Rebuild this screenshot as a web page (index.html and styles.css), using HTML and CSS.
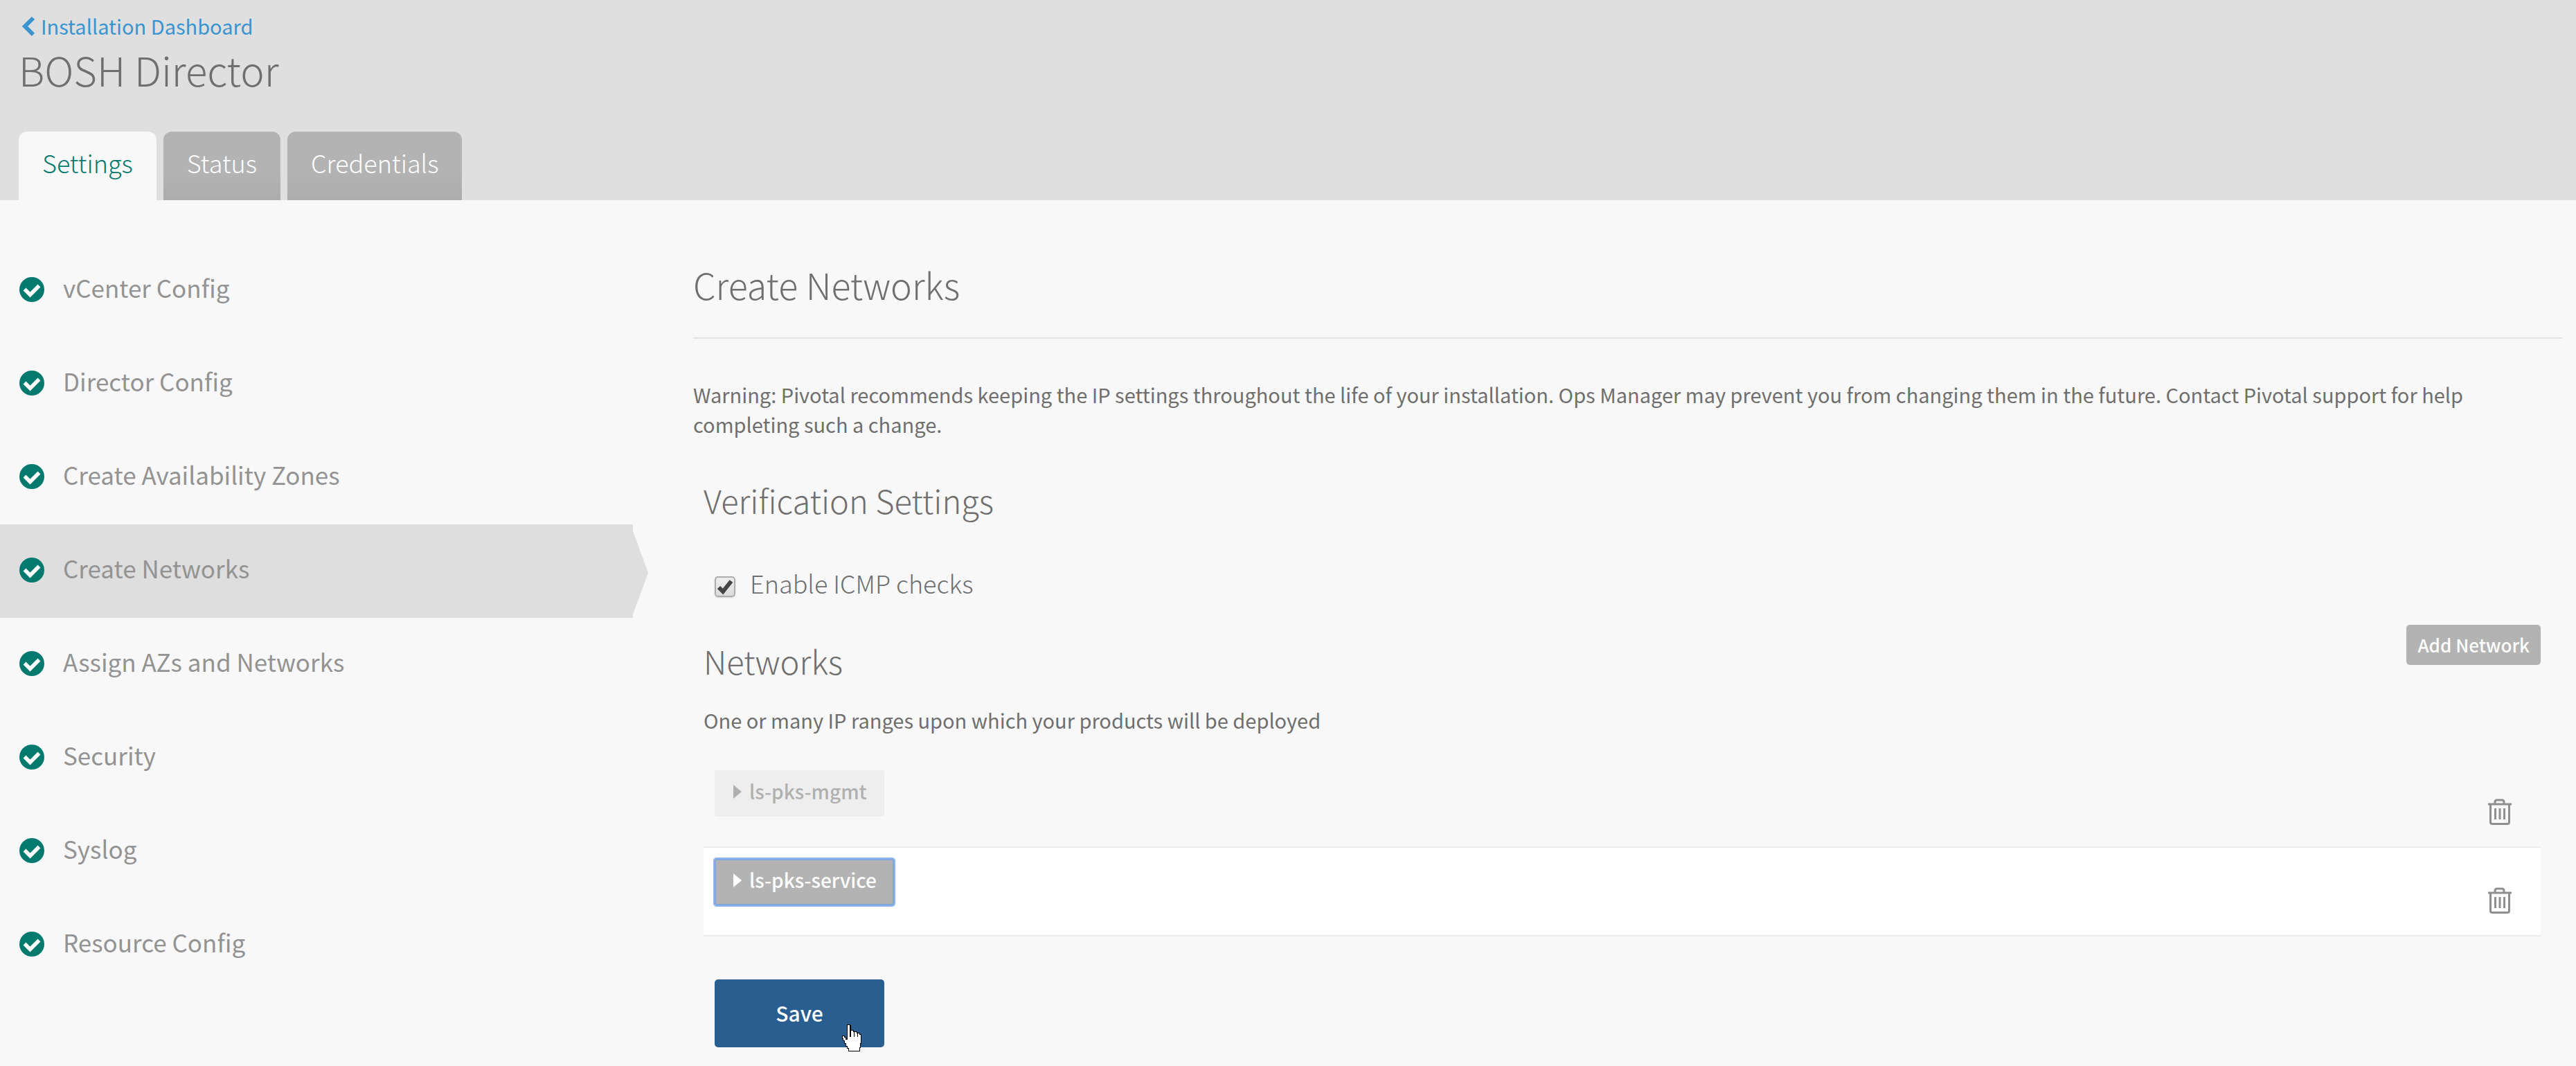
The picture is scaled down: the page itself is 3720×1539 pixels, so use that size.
FILE: index.html
```html
<!DOCTYPE html>
<html lang="en">
<head>
<meta charset="utf-8">
<meta name="viewport" content="width=device-width, initial-scale=1">
<title>BOSH Director</title>
<link rel="stylesheet" href="styles.css">
</head>
<body>
<svg class="sprite" aria-hidden="true">
  <symbol id="check" viewBox="0 0 36 36">
    <circle cx="18" cy="18" r="18" fill="#04796d"/>
    <path d="M7.500 17.500 L15.500 25.500 L28.500 12.500" fill="none" stroke="#fff" stroke-width="5.500"/>
  </symbol>
  <symbol id="trash" viewBox="0 0 36 38">
    <g fill="none" stroke="#8f8f8f" stroke-width="3">
      <path d="M1 8H35"/>
      <path d="M11 8V5Q11 2 14 2H21Q24 2 24 5V8"/>
      <path d="M4.500 8V34Q4.500 36.500 7 36.500H29Q31.500 36.500 31.500 34V8"/>
      <path d="M11.500 14V30M18 14V30M24.500 14V30"/>
    </g>
  </symbol>
  <symbol id="caret" viewBox="0 0 12 20">
    <path d="M0 0L12 10L0 20Z" fill="currentColor"/>
  </symbol>
</svg>

<header class="header">
  <a class="back" href="#dashboard"><svg class="back-icon" viewBox="0 0 20 30" aria-hidden="true"><path d="M17 3L5 15L17 27" fill="none" stroke="currentColor" stroke-width="6"/></svg>Installation Dashboard</a>
  <h1 class="title">BOSH Director</h1>
  <nav class="tabs" aria-label="Sections">
    <a class="tab tab-active" href="#settings" aria-current="page">Settings</a>
    <a class="tab" href="#status">Status</a>
    <a class="tab" href="#credentials">Credentials</a>
  </nav>
</header>

<div class="layout">
  <nav class="sidebar" aria-label="Settings">
    <a class="step" href="#vcenter"><svg class="step-icon"><use href="#check"/></svg><span class="step-name">vCenter Config</span></a>
    <a class="step" href="#director"><svg class="step-icon"><use href="#check"/></svg><span class="step-name">Director Config</span></a>
    <a class="step" href="#zones"><svg class="step-icon"><use href="#check"/></svg><span class="step-name">Create Availability Zones</span></a>
    <a class="step step-active" href="#networks" aria-current="page"><svg class="step-icon"><use href="#check"/></svg><span class="step-name">Create Networks</span></a>
    <a class="step" href="#assign"><svg class="step-icon"><use href="#check"/></svg><span class="step-name">Assign AZs and Networks</span></a>
    <a class="step" href="#security"><svg class="step-icon"><use href="#check"/></svg><span class="step-name">Security</span></a>
    <a class="step" href="#syslog"><svg class="step-icon"><use href="#check"/></svg><span class="step-name">Syslog</span></a>
    <a class="step" href="#resource"><svg class="step-icon"><use href="#check"/></svg><span class="step-name">Resource Config</span></a>
  </nav>

  <main class="content">
    <h2 class="heading">Create Networks</h2>
    <p class="warning">Warning: Pivotal recommends keeping the IP settings throughout the life of your installation. Ops Manager may prevent you from changing them in the future. Contact Pivotal support for help completing such a change.</p>

    <form class="form">
      <h3 class="subheading">Verification Settings</h3>
      <div class="check-row">
        <input class="check-box" type="checkbox" id="icmp" checked>
        <label class="check-label" for="icmp">Enable ICMP checks</label>
      </div>

      <div class="networks-head">
        <h3 class="subheading">Networks</h3>
        <button class="add" type="button">Add Network</button>
      </div>
      <p class="description">One or many IP ranges upon which your products will be deployed</p>

      <ul class="networks">
        <li class="network">
          <button class="toggle" type="button"><svg class="caret"><use href="#caret"/></svg>ls-pks-mgmt</button>
          <button class="delete" type="button" aria-label="Delete ls-pks-mgmt"><svg class="trash"><use href="#trash"/></svg></button>
        </li>
        <li class="network network-current">
          <button class="toggle toggle-focus" type="button"><svg class="caret"><use href="#caret"/></svg>ls-pks-service</button>
          <button class="delete" type="button" aria-label="Delete ls-pks-service"><svg class="trash"><use href="#trash"/></svg></button>
        </li>
      </ul>

      <div class="save-wrap">
        <button class="save" type="submit">Save</button>
        <svg class="pointer" viewBox="0 0 30 41" shape-rendering="crispEdges" aria-hidden="true">
          <path d="M8 1H12V9H17V11H22V13H26V15H28V28H27V34H26V39H10V35H8V32H6V28H4V24H2V21H1V17H4V19H6V22H8Z" fill="#fff" stroke="#000" stroke-width="1"/>
          <path d="M12 8V19M13 2V19M18 11V19M23 13V19M28 15V27" fill="none" stroke="#000" stroke-width="1"/>
        </svg>
      </div>
    </form>
  </main>
</div>
</body>
</html>
```
FILE: styles.css
```css
* {
  box-sizing: border-box;
}

body {
  margin: 0;
  background: #f8f8f8;
  color: #6f6f6f;
  font-family: "Noto Sans CJK SC", "Noto Sans", sans-serif;
  font-size: 29px;
  line-height: 43px;
}

h1,
h2,
h3,
p,
ul {
  margin: 0;
  padding: 0;
  font-weight: 400;
}

a {
  color: inherit;
  text-decoration: none;
}

button {
  margin: 0;
  padding: 0;
  border: 0;
  font: inherit;
  color: inherit;
  background: none;
}

svg {
  display: block;
}

.sprite {
  display: none;
}

/* Header and tabs */
.header {
  padding: 16px 27px 0;
  background: #dfdfdf;
}

.back {
  display: flex;
  align-items: center;
  gap: 8px;
  width: max-content;
  padding-left: 4px;
  color: #3a94d0;
}

.back-icon {
  width: 20px;
  height: 30px;
}

.title {
  margin-top: 5px;
  font-size: 58px;
  line-height: 72px;
  font-weight: 300;
}

.tabs {
  display: flex;
  gap: 10px;
  margin-top: 54px;
}

.tab {
  height: 99px;
  padding: 20px 34px 0;
  border-radius: 12px 12px 0 0;
  background: linear-gradient(#b3b3b3 60%, #acacac);
  color: #fff;
  font-size: 36px;
  line-height: 48px;
  font-weight: 300;
}

.tab-active {
  background: #f8f8f8;
  color: #04796d;
}

/* Steps on the left */
.layout {
  display: grid;
  grid-template-columns: 914px minmax(0, 1fr);
  gap: 87px;
}

.sidebar {
  padding-top: 63px;
}

.step {
  position: relative;
  display: flex;
  align-items: center;
  gap: 27px;
  height: 135px;
  padding: 0 0 4px 28px;
  color: #939393;
  font-size: 35px;
  line-height: 48px;
}

.step-icon {
  width: 36px;
  height: 36px;
}

.step-name {
  padding-bottom: 6px;
}

.step-active {
  background: #dedede;
}

.step-active::after {
  content: "";
  position: absolute;
  top: 10px;
  left: 100%;
  border: solid transparent;
  border-width: 60px 0 60px 22px;
  border-left-color: #dedede;
}

/* Main column */
.content {
  padding: 90px 20px 24px 0;
}

.heading {
  padding-bottom: 44px;
  border-bottom: 2px solid #e2e2e2;
  font-size: 52px;
  line-height: 64px;
  font-weight: 300;
}

.warning {
  margin-top: 59px;
}

.form {
  margin-top: 58px;
  padding: 0 31px 0 15px;
}

.subheading {
  font-size: 47px;
  line-height: 60px;
  font-weight: 300;
}

.check-row {
  display: flex;
  align-items: flex-end;
  gap: 21px;
  margin-top: 65px;
  padding-left: 16px;
}

.check-box {
  appearance: none;
  width: 30px;
  height: 30px;
  margin: 0 0 3px;
  border: 2px solid #adadad;
  border-radius: 5px;
  background: url("data:image/svg+xml,%3Csvg xmlns='http://www.w3.org/2000/svg' viewBox='0 0 26 26'%3E%3Cpath d='M4 14L10 20L22 5' fill='none' stroke='%23444' stroke-width='6'/%3E%3C/svg%3E"), linear-gradient(#eee, #dcdcdc);
  box-shadow: 0 1px 2px #d0d0d0;
}

.check-label {
  font-size: 36px;
  line-height: 48px;
  font-weight: 300;
}

.networks-head {
  display: flex;
  justify-content: space-between;
  align-items: flex-start;
  margin-top: 37px;
}

.networks-head .subheading {
  padding-top: 22px;
}

.add {
  height: 58px;
  padding: 0 16px 2px;
  border-radius: 5px;
  background: #b3b3b3;
  color: #fff;
  font-size: 26px;
  font-weight: 500;
}

.description {
  margin-top: 34px;
}

.networks {
  margin-top: 35px;
  list-style: none;
}

.network {
  display: flex;
  justify-content: space-between;
  align-items: flex-start;
  height: 128px;
  padding: 16px 41px 0 16px;
  border-bottom: 2px solid #ebebeb;
}

.network-current {
  background: #fff;
}

.toggle {
  display: flex;
  align-items: center;
  gap: 11px;
  height: 67px;
  padding: 0 25px 6px 27px;
  border-radius: 3px;
  background: #eee;
  color: #b0b0b0;
  font-size: 28px;
  font-weight: 500;
}

.toggle-focus {
  background: #b3b3b3;
  color: #fff;
  box-shadow: 0 0 0 2px #8db4f2, inset 0 0 0 2px #84a6dc;
}

.caret {
  width: 12px;
  height: 20px;
}

.delete {
  margin-top: 41px;
}

.trash {
  width: 36px;
  height: 38px;
}

.save-wrap {
  position: relative;
  width: max-content;
  margin: 62px 0 0 16px;
}

.save {
  width: 245px;
  height: 98px;
  padding-bottom: 2px;
  border-radius: 5px;
  background: #2a5d90;
  color: #fff;
  font-size: 30px;
  font-weight: 500;
}

.pointer {
  position: absolute;
  top: 64px;
  left: 183px;
  width: 30px;
  height: 41px;
}
```
